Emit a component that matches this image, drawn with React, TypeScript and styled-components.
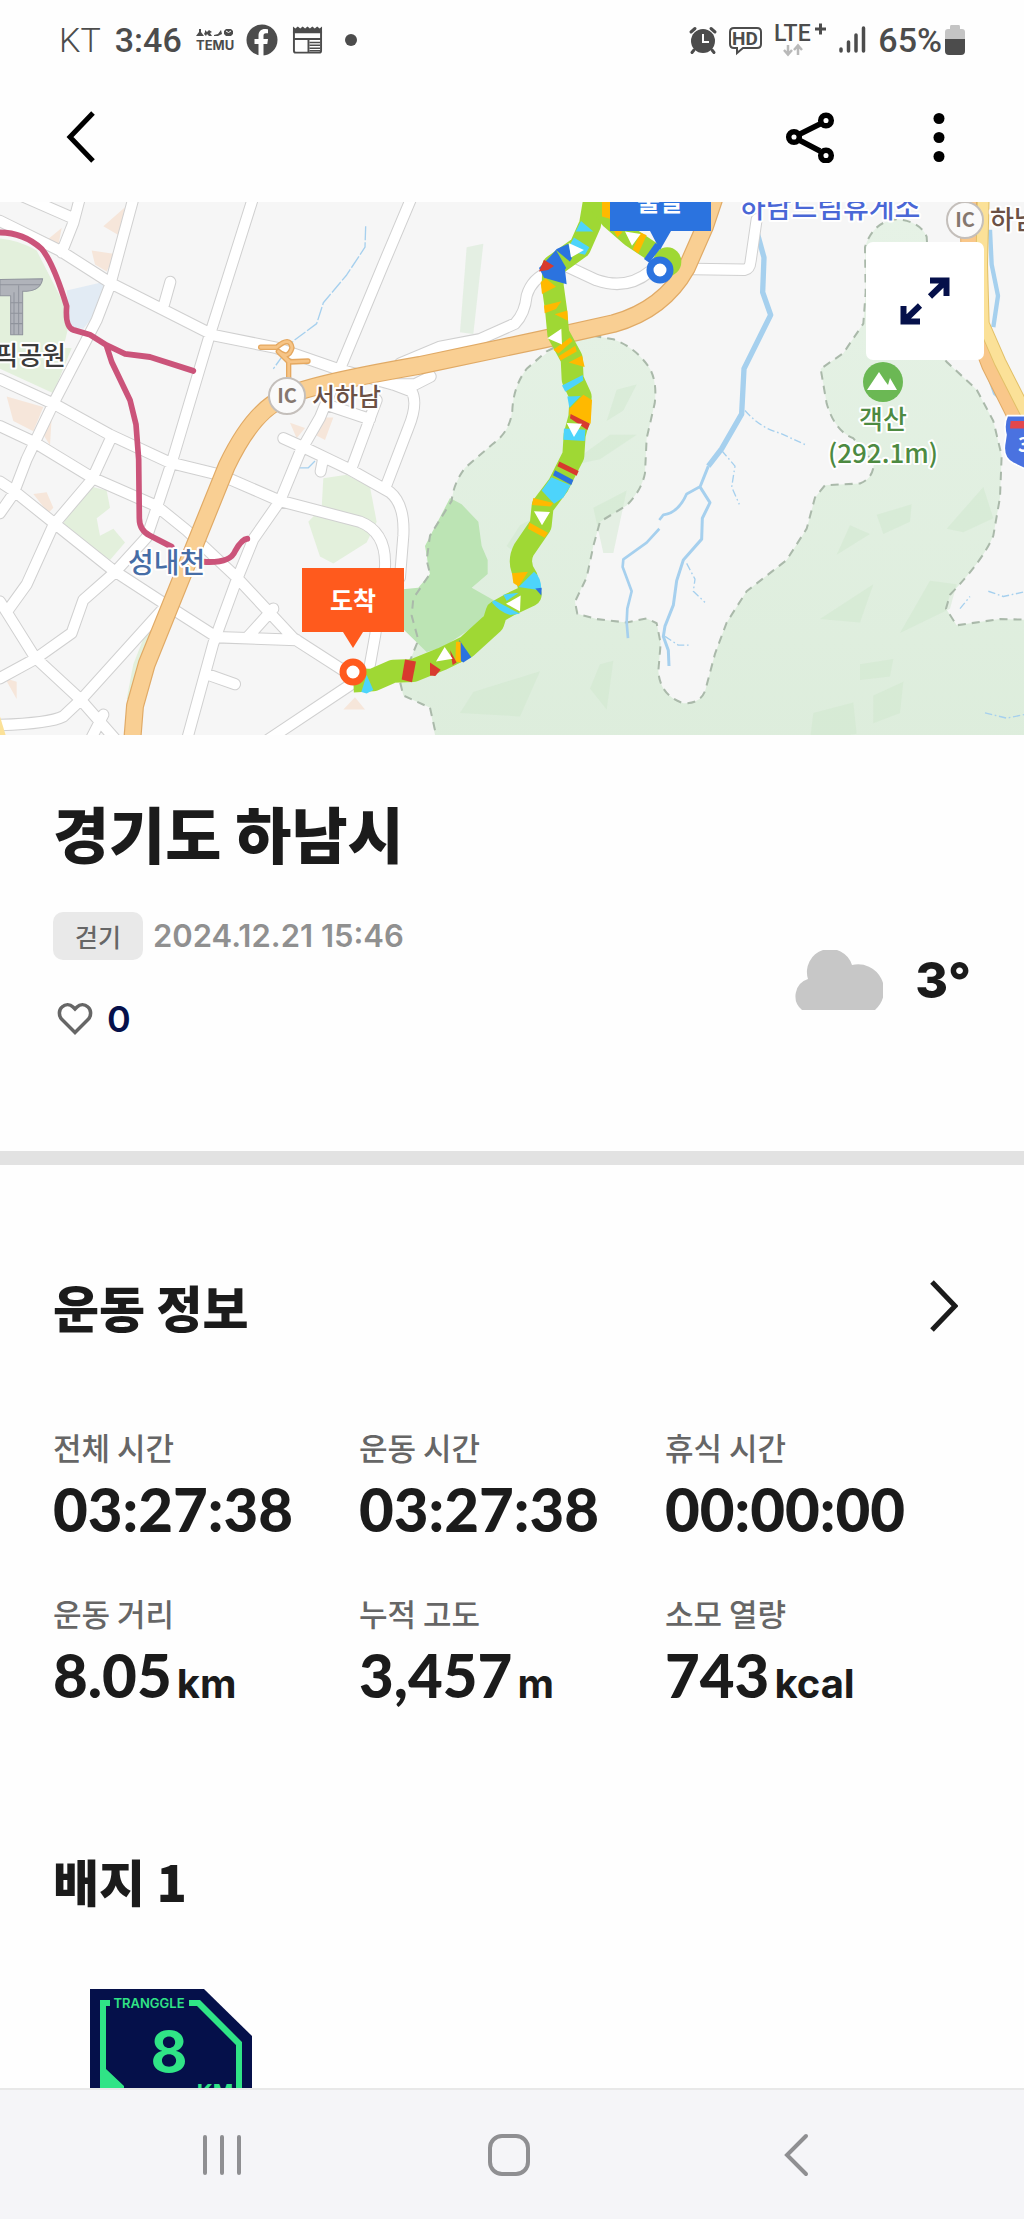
import React from "react";
import styled, { createGlobalStyle } from "styled-components";

const KR = '"Inter", "Noto Sans CJK KR", sans-serif';
const HANGUL = '"Noto Sans CJK KR", sans-serif';

const GlobalStyle = createGlobalStyle`
  *, *::before, *::after { box-sizing: border-box; }
  body { margin: 0; background: #fefefe; font-family: ${KR}; color: #1b1b1b; }
  h1, h2, dl, dd, p { margin: 0; }
  svg { display: block; }
`;

const Screen = styled.div`
  display: flex;
  flex-direction: column;
  height: 100vh;
  overflow: hidden;
`;

const StatusBar = styled.div`
  display: flex;
  flex: none;
  justify-content: space-between;
  align-items: center;
  height: 72px;
  padding: 8px 59px 0;
  color: #4c4c4c;
  font: 500 34px/40px Roboto, sans-serif;

  svg { overflow: visible; }
`;

const StatusGroup = styled.div<{ $gap: number }>`
  display: flex;
  align-items: center;
  gap: ${(p) => p.$gap}px;
`;

const Carrier = styled.span`
  font-weight: 300;
`;

const BatteryGroup = styled.span`
  display: flex;
  align-items: center;
  gap: 3px;
`;

const AppBar = styled.header`
  display: flex;
  flex: none;
  justify-content: space-between;
  align-items: center;
  height: 130px;
  padding: 0 55px 0 51px;
`;

const Actions = styled.div`
  display: flex;
  align-items: center;
  gap: 69px;
`;

const IconButton = styled.button`
  display: flex;
  align-items: center;
  justify-content: center;
  min-width: 60px;
  height: 60px;
  padding: 0;
  border: 0;
  background: none;
  color: inherit;
`;

const BackButton = styled(IconButton)`
  justify-content: flex-start;
  padding-left: 14px;
`;

const NextButton = styled(IconButton)`
  justify-content: flex-end;
  padding-right: 13px;
`;

const Content = styled.main`
  flex: 1;
  min-height: 0;
  overflow-y: auto;
  scrollbar-width: none;
`;

const MapArea = styled.section`
  position: relative;
  height: 533px;
  overflow: hidden;
`;

const ExpandButton = styled.button`
  position: absolute;
  top: 40px;
  right: 40px;
  display: flex;
  align-items: center;
  justify-content: center;
  width: 118px;
  height: 118px;
  padding: 0;
  border: 0;
  border-radius: 7px;
  background: #ffffff;
`;

const Summary = styled.section`
  padding: 56px 53px 112px;
  border-bottom: 14px solid #e2e2e2;
`;

const Place = styled.h1`
  font: 900 61px/84px ${HANGUL};
`;

const SummaryRow = styled.div`
  display: flex;
  justify-content: space-between;
  align-items: center;
  margin-top: 37px;
`;

const Meta = styled.div`
  display: flex;
  align-items: center;
  gap: 10px;
`;

const Chip = styled.span`
  height: 48px;
  padding: 0 22px;
  border-radius: 10px;
  background: #e9e9e9;
  color: #666666;
  font: 500 25px/48px ${HANGUL};
`;

const DateText = styled.time`
  color: #909090;
  font-size: 31px;
  font-weight: 600;
  line-height: 48px;
`;

const LikeButton = styled.button`
  display: flex;
  align-items: center;
  gap: 14px;
  height: 40px;
  margin-top: 39px;
  padding: 0 0 0 4px;
  border: 0;
  background: none;
  color: #05104a;
  font: 600 36px/40px ${KR};
`;

const Weather = styled.div`
  display: flex;
  align-items: center;
  gap: 32px;
  padding-top: 8px;
  font-size: 50px;
  font-weight: 800;
  line-height: 60px;
`;

const Exercise = styled.section`
  padding: 106px 53px 0;
`;

const SectionHead = styled.div`
  display: flex;
  justify-content: space-between;
  align-items: center;
`;

const SectionTitle = styled.h2`
  font: 900 50px/70px ${HANGUL};
`;

const Stats = styled.dl`
  display: grid;
  grid-template-columns: repeat(3, 1fr);
  row-gap: 50px;
  margin-top: 84px;
`;

const StatLabel = styled.dt`
  color: #666666;
  font: 500 31px/44px ${HANGUL};
`;

const StatValue = styled.dd`
  display: flex;
  align-items: baseline;
  gap: 5px;
  height: 64px;
  margin-top: 8px;
  font: 900 60px/64px Lato, sans-serif;
`;

const Unit = styled.span`
  font: 700 40px/40px ${KR};
`;

const Badges = styled.section`
  padding: 138px 53px 0;
`;

const BadgeList = styled.div`
  display: flex;
  margin-top: 74px;
  padding-left: 37px;
`;

const NavBar = styled.nav`
  display: grid;
  flex: none;
  grid-template-columns: repeat(3, 1fr);
  justify-items: center;
  align-items: center;
  height: 131px;
  padding: 0 84px 0 78px;
  border-top: 2px solid #e8e8e8;
  background: #f5f5f8;
`;

const MapLabel = styled.text<{ $size?: number; $bold?: boolean }>`
  font-family: ${HANGUL};
  font-size: ${(p) => p.$size ?? 26}px;
  font-weight: ${(p) => (p.$bold ? 700 : 500)};
  paint-order: stroke;
  stroke-linejoin: round;
`;

const stats = [
  { label: "전체 시간", value: "03:27:38" },
  { label: "운동 시간", value: "03:27:38" },
  { label: "휴식 시간", value: "00:00:00" },
  { label: "운동 거리", value: "8.05", unit: "km" },
  { label: "누적 고도", value: "3,457", unit: "m" },
  { label: "소모 열량", value: "743", unit: "kcal" },
];

const roads = [
  "M60 0L215 65",
  "M242 0L220 80L185 165",
  "M0 75L180 160L335 255L640 403L830 440L1010 500L1180 545L1235 565Q1255 600 1225 670L1155 845",
  "M403 0L330 260L290 360L160 600L80 760L40 860L0 915",
  "M762 0L630 400L515 770L470 900L440 985L345 1085L250 1165L215 1260L105 1335L0 1390",
  "M0 530L170 605L330 690L510 770L660 805L840 880L1080 940Q1160 970 1155 1070L1125 1270L1110 1350",
  "M0 665L100 710L280 815L470 895L560 965L710 1100L880 1275L1050 1380",
  "M0 825L40 850L170 950L340 1080L500 1180L650 1272L890 1280",
  "M335 695L275 820L160 950L80 1120L20 1200",
  "M0 1170L20 1200L105 1330L240 1450L350 1570",
  "M1238 0L1150 200L1020 500L960 640L900 740L840 880L760 990L705 1120L640 1290L560 1570",
  "M850 700L920 730L1050 790L1170 855Q1215 890 1210 980L1200 1100",
  "M985 605L1110 645",
  "M1130 590L1055 785",
  "M1292 522L1245 545L1180 545",
  "M490 1190L245 1450L190 1500Q150 1520 0 1525",
  "M800 1570L1050 1410",
  "M625 1380L705 1407",
  "M511 250L492 315",
  "M820 1190L740 1275",
  "M968 765L962 795",
  "M310 1495L270 1570",
  "M1200 485L1320 437L1440 415L1545 370Q1575 340 1580 290Q1595 240 1650 220",
  "M1700 205L1790 245Q1880 275 1950 220",
  "M2080 213L2235 215Q2250 212 2252 190L2270 70",
];

const forest =
  "M1780 405L1840 415Q1910 440 1950 500Q1972 540 1964 600L1940 700L1935 800Q1925 850 1880 893L1800 940L1780 1010L1760 1100L1725 1170L1732 1205L1790 1220L1880 1230L1940 1218L1970 1232L1982 1290L1975 1370Q1980 1440 2050 1462Q2110 1465 2120 1410L2145 1320L2180 1230L2240 1140L2360 1050L2420 960L2445 870L2475 835L2580 830Q2620 815 2622 770L2560 700Q2505 680 2480 600L2462 500L2530 455L2590 370L2597 280L2595 150Q2620 75 2690 70Q2760 75 2780 120L2800 440L2840 480L2930 560L2980 650L3005 750L3000 870L2980 980Q2950 1050 2850 1150L2838 1190L2870 1238L3000 1220L3090 1222";
const forestWest =
  "M1660 440L1640 450L1580 500Q1540 550 1537 620Q1530 680 1480 715L1395 785Q1360 830 1355 880L1290 980L1280 1050L1290 1090L1240 1160L1235 1210L1255 1280L1232 1335L1200 1400L1210 1440L1290 1475L1312 1570";

const motorway =
  "M395 1590L405 1470L440 1350L600 970L680 780Q760 620 850 585Q900 550 1260 490L1630 415L1840 370Q1990 330 2060 210L2115 90L2150 -10";

const blue = "#2b73df";
const cyan = "#4dd4fb";
const green = "#9fd834";
const amber = "#ffb900";
const red = "#d83a2e";
const orange = "#ff5a1d";

const routeParts: [string, string][] = [
  [cyan, "M1743 75L1780 105L1727 105Z"],
  [cyan, "M1722 122L1768 150L1755 172L1700 160Z"],
  [blue, "M1670 155L1705 140L1716 182L1695 215L1700 257L1632 238L1617 210L1650 178Z"],
  [red, "M1632 186L1662 204L1644 216L1617 220Z"],
  [green, "M1668 158L1720 200L1700 212Z"],
  [amber, "M1622 250L1638 240L1668 264L1626 285Z"],
  [amber, "M1632 318L1684 306L1668 328L1634 340Z"],
  [amber, "M1664 343L1702 332L1704 362Z"],
  [amber, "M1660 445L1710 410L1718 420L1675 456Z"],
  [amber, "M1676 464L1726 434L1730 450L1682 476Z"],
  [amber, "M1706 482L1746 462L1754 495Z"],
  [cyan, "M1686 548L1748 518L1750 534L1696 566Z"],
  [cyan, "M1702 580L1742 578L1708 612Z"],
  [amber, "M1708 615L1750 575L1776 590L1772 658L1708 632Z"],
  [red, "M1712 630L1770 658L1762 676L1710 642Z"],
  [cyan, "M1692 672L1756 675L1754 708L1690 704Z"],
  [red, "M1678 767L1736 794L1730 808L1672 780Z"],
  [blue, "M1665 792L1720 820L1714 834L1659 806Z"],
  [cyan, "M1654 812L1712 835L1690 870L1662 888L1625 850Z"],
  [amber, "M1600 872L1660 886L1652 896L1596 892Z"],
  [amber, "M1588 942L1644 972L1634 986L1584 960Z"],
  [amber, "M1536 1088L1584 1084L1556 1126L1540 1116Z"],
  [cyan, "M1602 1084Q1625 1100 1624 1138L1556 1128Z"],
  [blue, "M1606 1132L1625 1130L1624 1152Z"],
  [cyan, "M1510 1150L1556 1144L1520 1168Z"],
  [cyan, "M1482 1165L1560 1205L1530 1208Q1500 1200 1476 1172Z"],
  [blue, "M1378 1280L1414 1330L1390 1345L1382 1340Z"],
  [amber, "M1368 1285L1382 1285L1382 1345L1366 1342Z"],
  [red, "M1350 1310L1370 1345L1358 1352Z"],
  [red, "M1290 1345L1322 1366L1306 1384L1290 1382Z"],
  [red, "M1215 1336L1248 1342L1236 1402L1205 1394Z"],
  [cyan, "M1100 1380L1120 1424L1100 1434L1084 1430Z"],
  [amber, "M1806 20L1830 20L1830 68L1806 62Z"],
  [amber, "M1840 100L1868 106L1852 122Z"],
  [amber, "M1922 108L1940 116L1915 168L1898 156Z"],
  [blue, "M1966 138L1984 150L1948 195L1932 184Z"],
];

const arrows = [
  "M1706 138L1752 158L1713 180Z",
  "M1875 105L1922 112L1896 146Z",
  "M1642 412L1684 385L1686 430Z",
  "M1700 656L1746 658L1722 696Z",
  "M1602 910L1650 912L1626 950Z",
  "M1518 1176L1562 1152L1560 1198Z",
  "M1334 1300L1358 1334L1308 1342Z",
];

const shades = [
  "M1400 150L1450 140L1420 400L1380 395Z",
  "M1850 560L1910 545L1870 620L1820 650Z",
  "M1700 780L1830 690L1910 690L1800 760Z",
  "M1560 950L1600 930L1560 1040L1520 1010Z",
  "M1780 900L1880 850L1840 1030L1810 1030Z",
  "M1420 1430L1620 1370L1560 1500L1380 1490Z",
  "M1800 1350L1840 1340L1820 1480L1770 1420Z",
  "M2840 960L2950 840L2980 930L2890 970Z",
  "M2510 1035L2550 950L2610 975Z",
  "M2630 920L2735 890L2730 940L2650 975Z",
  "M2700 1260L2790 1110L2870 1120L2850 1190Z",
  "M2460 1220L2620 1120L2580 1230Z",
  "M2580 1350L2680 1335L2670 1385L2580 1395Z",
  "M2620 1440L2710 1400L2700 1490L2620 1520Z",
  "M2440 1490L2560 1460L2570 1550L2430 1570Z",
];

function RouteMap() {
  return (
    <svg
      width="100%"
      height="100%"
      viewBox="0 202 1024 533"
      preserveAspectRatio="xMidYMid slice"
      role="img"
      aria-label="이동 경로 지도"
    >
      <defs>
        <linearGradient id="hill" x1="0" y1="0" x2="0" y2="1">
          <stop offset="0" stopColor="#e6f2e6" />
          <stop offset="1" stopColor="#ddeddc" />
        </linearGradient>
      </defs>
      <rect y="202" width="1024" height="533" fill="#f6f6f6" />
      <g transform="translate(0 195) scale(0.33333 0.3476)" fill="none" strokeLinejoin="round">
        <path fill="#e3f0dc" d="M0 125Q60 130 110 160L190 310L205 380L190 440L215 440L160 570L0 500Z" />
        <path fill="#e3f0dc" d="M270 838L320 850L330 900L290 930L300 980L340 960L375 1000L330 1050L185 950Z" />
        <path fill="#e3f0dc" d="M970 815L1040 805L1110 840L1130 940L1100 1000L1000 1060L960 1040L925 940L965 900Z" />
        <path fill="#e3f0dc" d="M445 1240L480 1200L390 1450L380 1450L400 1350Z" />
        <path fill="#e2ebf4" d="M200 275L310 250L320 300L250 385L210 380Z" />
        <path
          fill="#f6e6da"
          d="M310 90L375 35L355 115ZM275 160L345 170L320 220L285 200ZM140 130L185 95L175 145ZM20 580L130 610L100 680L40 650ZM100 860L140 855L160 900L145 915ZM130 690L155 640L150 720ZM950 640L1000 640L975 705L945 690ZM870 655L915 670L890 700ZM15 1390L50 1400L50 1450ZM1030 1480L1065 1445L1095 1480Z"
        />

        <path
          fill="url(#hill)"
          d={`${forest}L3090 1590L1312 1590L1290 1475L1210 1440L1200 1400L1232 1335L1255 1280L1235 1210L1240 1160L1290 1090L1280 1050L1290 980L1355 880Q1360 830 1395 785L1480 715Q1530 680 1537 620Q1540 550 1580 500L1660 440Z`}
        />
        <path fill="#cfe6cd" fillOpacity="0.45" d={shades.join("")} />
        <path
          fill="#bce4b4"
          d="M1350 872L1385 890L1435 940L1445 1010L1463 1050L1463 1090L1415 1130L1480 1165L1440 1230L1330 1300L1280 1315L1200 1240L1200 1135L1255 1130L1290 1090L1275 1010Z"
        />
        <path stroke="#aab9aa" strokeWidth="6" strokeDasharray="24 18" d={forest + forestWest} />

        <g stroke="#a6d0ee" strokeWidth="4">
          <path d="M1097 90L1095 150L1040 230L970 310L950 370L880 420L820 500" strokeDasharray="40 6" />
          <path d="M900 785L925 785L945 765" />
          <path
            strokeWidth="16"
            d="M2272 110L2292 180L2288 280L2312 345L2232 500L2225 630L2165 730L2125 780"
          />
          <path strokeWidth="9" d="M2125 780L2100 840L2130 885L2107 930L2105 990L2050 1050L2030 1110L2020 1180L1995 1240L1990 1270L2005 1310L2007 1355" />
          <path strokeWidth="8" d="M2098 840L2060 860Q2035 915 1990 920L1978 935M1978 960L1940 1000L1870 1048L1868 1070L1895 1140L1882 1190L1880 1230L1884 1275" />
          <path strokeDasharray="22 8 5 8" d="M2060 1060L2085 1105L2080 1140L2115 1172M2235 620Q2280 670 2340 685L2420 720M2165 735L2205 780L2195 840L2218 890M2880 1190L2910 1155M2965 1140L3010 1155L3072 1142M2955 1490L3020 1505L3072 1495M1995 1270L2035 1295L2070 1295" />
          <path strokeWidth="13" d="M2970 100L2975 200L2994 290L2980 380M2960 500L2985 570L3025 605" />
        </g>

        <path stroke="#d0d0d0" strokeWidth="36" strokeLinecap="round" d={roads.join("")} />
        <path stroke="#ffffff" strokeWidth="30" strokeLinecap="round" d={roads.join("")} />

        <path stroke="#e0aa66" strokeWidth="54" d={motorway} />
        <path stroke="#f9cf93" strokeWidth="47" d={motorway} />
        <path stroke="#e5a860" strokeWidth="16" strokeLinecap="round" d="M782 438L830 438Q870 405 876 440Q865 475 835 450L870 480L924 478M866 530L866 480L835 450" />
        <path stroke="#f6c486" strokeWidth="8" strokeLinecap="round" d="M782 438L830 438Q870 405 876 440Q865 475 835 450L870 480L924 478M866 530L866 480L835 450" />

        <path stroke="#e0aa66" strokeWidth="52" d="M2905 20L2910 340L2970 490L3090 720" />
        <path stroke="#f9c78a" strokeWidth="46" d="M2905 20L2910 340L2970 490L3090 720" />
        <path stroke="#e2c068" strokeWidth="38" d="M2950 0L2945 200L2950 370L3000 480L3090 650" />
        <path stroke="#fbe198" strokeWidth="32" d="M2950 0L2945 200L2950 370L3000 480L3090 650" />
        <path fill="#fbe198" d="M0 1500L22 1570L0 1570Z" />

        <path
          stroke="#cb547a"
          strokeWidth="17"
          strokeLinecap="round"
          d="M0 108Q70 108 125 155Q160 195 200 320Q195 380 220 388L270 402L320 432L375 457L450 466L580 506M320 435L335 480L390 590L408 660L416 760L418 930Q418 965 450 980L515 1012M610 1055Q690 1060 705 1025Q725 990 742 989"
        />
        <path
          fill="#b0b3ba"
          stroke="#8f939c"
          strokeWidth="3"
          d="M0 243L128 241Q122 275 80 277L68 277L68 402L32 402L32 290L0 290Z"
        />
        <path stroke="#8f939c" strokeWidth="3" d="M0 258L122 258M42 280V402M56 260V402M32 310H68M32 340H68M32 370H68" />

        <path
          stroke={green}
          strokeWidth="66"
          d="M1785 0L1770 85L1740 150L1660 205L1658 260L1668 330L1675 400L1715 470L1718 530L1742 580L1738 640L1724 690L1720 750L1675 835L1628 895L1622 950L1572 1020Q1550 1060 1580 1100L1592 1150L1530 1178L1490 1200L1480 1230L1400 1300L1325 1335L1240 1368L1180 1370L1120 1395L1060 1398"
        />
        <path stroke={green} strokeWidth="56" d="M1790 20L1830 70L1890 120L1960 165" />
        <circle cx="2002" cy="192" r="42" fill={green} />
        {routeParts.map(([color, d]) => (
          <path key={d} fill={color} d={d} />
        ))}
        <path fill="#ffffff" d={arrows.join("")} />

        <path
          fill="#4a72e0"
          stroke="#ffffff"
          strokeWidth="5"
          d="M3022 635H3080V790L3040 772Q3005 755 3015 710L3018 690Q3010 660 3022 635Z"
        />
        <path fill="#e2474c" d="M3032 650H3080V672H3030Z" />
      </g>

      <path fill={blue} d="M610 195H711V231H671L660 250L650 231H610Z" />
      <circle cx="660" cy="270" r="10" fill="#ffffff" stroke={blue} strokeWidth="7" />
      <path fill={orange} d="M302 568H404V632H363L353 648L343 632H302Z" />
      <circle cx="353" cy="672" r="10" fill="#ffffff" stroke={orange} strokeWidth="7" />

      <g fill="#fafafa" stroke="#c4bfbb" strokeWidth="2">
        <circle cx="287" cy="396" r="18" />
        <circle cx="965" cy="220" r="18" />
      </g>

      <circle cx="883" cy="382" r="20" fill="#6bb854" />
      <path fill="#ffffff" d="M867 390L879 372L885 381L888 385L890 378L897 390Z" />

      <MapLabel x="66" y="365" textAnchor="end" fill="#3b3b3b" stroke="#ffffff" strokeWidth="4">픽공원</MapLabel>
      <MapLabel x="312" y="406" $size={25} fill="#6b5145" stroke="#ffffff" strokeWidth="4">서하남</MapLabel>
      <MapLabel x="128" y="573" $size={28} fill="#466da6" stroke="#ffffff" strokeWidth="4">성내천</MapLabel>
      <MapLabel x="287" y="403" $size={20} textAnchor="middle" fill="#85786f" $bold>IC</MapLabel>
      <MapLabel x="965" y="227" $size={20} textAnchor="middle" fill="#85786f" $bold>IC</MapLabel>
      <MapLabel x="990" y="229" fill="#6b5145" stroke="#ffffff" strokeWidth="4">하남</MapLabel>
      <MapLabel x="740" y="218" $size={28} fill="#4a67d6" stroke="#ffffff" strokeWidth="4">하남드림휴게소</MapLabel>
      <MapLabel textAnchor="middle" fill="#4d8a41" stroke="#ffffff" strokeWidth="4">
        <tspan x="883" y="429">객산</tspan>
        <tspan x="883" y="463">(292.1m)</tspan>
      </MapLabel>
      <MapLabel x="353" y="610" $size={25} textAnchor="middle" fill="#ffffff" $bold>도착</MapLabel>
      <MapLabel x="660" y="211" $size={25} textAnchor="middle" fill="#ffffff" $bold>출발</MapLabel>
      <MapLabel x="1018" y="452" $size={20} fill="#ffffff" $bold>3</MapLabel>
    </svg>
  );
}

const TemuIcon = () => (
  <svg width="36" height="22" viewBox="0 0 36 22" fill="currentColor" aria-label="Temu">
    <path d="M3 0h2v3l3 4H0l3-4zM9 1l2 2 2-2 3 2-2 1 2 3h-3l-2-2-1 2-2-2 1-2zM18 6l4-1 3-4 1 4-4 2h-4zM30 0h5l2 2v3l-2 2h-5l-2-2V2z" />
    <path stroke="#fefefe" d="M30 2q2.500 3 5 0" fill="none" />
    <text x="0" y="21" fontFamily="Inter, sans-serif" fontSize="13" fontWeight="700">TEMU</text>
  </svg>
);

const FacebookIcon = () => (
  <svg width="32" height="32" viewBox="0 0 32 32" aria-label="Facebook">
    <circle cx="16" cy="16" r="15.500" fill="currentColor" />
    <path fill="#fefefe" d="M12.500 32V20H8.500v-5h4v-3.200c0-4.500 2.500-6.800 6.500-6.800 1.500 0 3 .3 3 .3v4h-2c-2 0-2.500 1.200-2.500 2.500V15h4.500l-.7 5H17.500v12z" />
  </svg>
);

const NewsIcon = () => (
  <svg width="31" height="30" viewBox="0 0 32 30" fill="none" stroke="currentColor" strokeWidth="2" aria-label="뉴스">
    <path fill="currentColor" stroke="none" d="M1 1l2.500 2 2.500-2L8.500 3 11 1l2.500 2L16 1l2.500 2L21 1l2.500 2L26 1l2.500 2L31 1v7H1z" />
    <path d="M2 6v20q0 2 2 2h24q2 0 2-2V6M3 14h26M17 14v14" />
    <path strokeWidth="1.500" d="M18 17.500h11M18 20.500h11M18 23.500h11M18 26h11" />
  </svg>
);

const AlarmIcon = () => (
  <svg width="28" height="28" viewBox="0 0 28 28" fill="none" stroke="currentColor" strokeWidth="3" strokeLinecap="round" aria-label="알람">
    <circle cx="14" cy="15" r="12" fill="currentColor" stroke="none" />
    <path d="M2 6l4-3.500M26 6l-4-3.500M5 24l-2 2.500M23 24l2 2.500" />
    <path stroke="#fefefe" strokeWidth="2" strokeLinecap="butt" d="M14 8v8h6" />
  </svg>
);

const HdIcon = () => (
  <svg width="33" height="30" viewBox="0 0 33 30" fill="none" stroke="currentColor" strokeWidth="2" aria-label="HD">
    <path d="M5 3h23q4 0 4 4v12q0 4-4 4H14l-6 5v-5H5q-4 0-4-4V7q0-4 4-4z" />
    <text x="16" y="20" textAnchor="middle" fill="currentColor" stroke="none" fontFamily="Roboto, sans-serif" fontSize="19" fontWeight="700">HD</text>
  </svg>
);

const LteIcon = () => (
  <svg width="52" height="34" viewBox="0 0 52 34" fill="none" aria-label="LTE+">
    <text x="0" y="18" fill="currentColor" fontFamily="Roboto, sans-serif" fontSize="23" fontWeight="500">LTE</text>
    <path stroke="currentColor" strokeWidth="3" d="M41 6h11M46.500 0.500v11" />
    <path stroke="#b9b9b9" strokeWidth="2.500" d="M14 22v9M10 27l4 4.500 4-4.500M24 32v-9M20 27l4-4.500 4 4.500" />
  </svg>
);

const SignalIcon = () => (
  <svg width="28" height="28" viewBox="0 0 28 28" stroke="currentColor" strokeWidth="3.500" strokeLinecap="round" aria-label="신호">
    <path d="M3 23v2M10.500 16v9M18 9v16M25.500 2v23" />
  </svg>
);

const BatteryIcon = () => (
  <svg width="20" height="30" viewBox="0 0 20 30" aria-label="배터리">
    <path fill="#c4c4c4" d="M6 0h8q1 0 1 2v2h2q3 0 3 3v9H0V7q0-3 3-3h2V2q0-2 1-2z" />
    <path fill="currentColor" d="M0 14h20v12q0 4-4 4H4q-4 0-4-4z" />
  </svg>
);

const ShareIcon = () => (
  <svg width="50" height="52" viewBox="0 0 50 52" fill="none" stroke="#000000" strokeWidth="5.500">
    <path d="M14 23.500L35 13M14 29L35 40" />
    <circle cx="9" cy="26" r="5.300" />
    <circle cx="41" cy="9.500" r="5.300" />
    <circle cx="41" cy="44.500" r="5.300" />
  </svg>
);

const MoreIcon = () => (
  <svg width="12" height="50" viewBox="0 0 12 50" fill="#000000">
    <circle cx="6" cy="6.500" r="5.500" />
    <circle cx="6" cy="25.500" r="5.500" />
    <circle cx="6" cy="44.500" r="5.500" />
  </svg>
);

const ExpandIcon = () => (
  <svg width="50" height="48" viewBox="0 0 50 48" fill="none" stroke="#05104a" strokeWidth="6">
    <path d="M30 3.500h16.500V19M46 4L30 19.500M20 44.500H3.500V29M4 44L20 28.500" />
  </svg>
);

const HeartIcon = () => (
  <svg width="36" height="34" viewBox="0 0 36 34" fill="none" stroke="#666666" strokeWidth="3.500">
    <path d="M18 30.500L5 17.500C1.500 14 1.500 8 5 5C8.500 1.800 13 2 16 5L18 7L20 5C23 2 27.500 1.800 31 5C34.500 8 34.500 14 31 17.500Z" />
  </svg>
);

const CloudIcon = () => (
  <svg width="88" height="60" viewBox="0 0 88 60" fill="#c7c7c7" aria-label="흐림">
    <path d="M7 60A18 18 0 0 1 13 29A22.500 22.500 0 0 1 57 15A26 26 0 0 1 80 60Z" />
  </svg>
);

const DistanceBadge = () => (
  <svg width="162" height="190" viewBox="0 0 162 190" aria-label="8KM 배지">
    <path fill="#05104a" d="M0 0H114L162 47V190H0Z" />
    <path fill="#30e486" d="M10 11H20V17H16V80L34 97V180H10ZM99 11H110L152 53V180H146V56L107 17H99Z" />
    <g fill="#30e486" fontFamily="Inter, sans-serif" textAnchor="middle">
      <text x="59" y="19" fontSize="13" fontWeight="600">TRANGGLE</text>
      <text x="79" y="83" fontSize="57" fontWeight="700">8</text>
      <text x="125" y="111" fontSize="22" fontWeight="700">KM</text>
    </g>
  </svg>
);

export default function App() {
  return (
    <>
      <GlobalStyle />
      <Screen>
        <StatusBar>
          <StatusGroup $gap={14}>
            <Carrier>KT</Carrier>
            <span>3:46</span>
            <TemuIcon />
            <FacebookIcon />
            <NewsIcon />
            <svg width="36" height="12" viewBox="0 0 36 12" fill="currentColor" aria-hidden="true">
              <circle cx="14" cy="6" r="6" />
            </svg>
          </StatusGroup>
          <StatusGroup $gap={12}>
            <AlarmIcon />
            <HdIcon />
            <LteIcon />
            <SignalIcon />
            <BatteryGroup>
              <span>65%</span>
              <BatteryIcon />
            </BatteryGroup>
          </StatusGroup>
        </StatusBar>

        <AppBar>
          <BackButton aria-label="뒤로">
            <svg width="30" height="52" viewBox="0 0 30 52" fill="none" stroke="#000000" strokeWidth="5">
              <path d="M28 2L5 26L28 50" />
            </svg>
          </BackButton>
          <Actions>
            <IconButton aria-label="공유">
              <ShareIcon />
            </IconButton>
            <IconButton aria-label="더보기">
              <MoreIcon />
            </IconButton>
          </Actions>
        </AppBar>

        <Content>
          <MapArea>
            <RouteMap />
            <ExpandButton aria-label="지도 확대">
              <ExpandIcon />
            </ExpandButton>
          </MapArea>

          <Summary>
            <Place>경기도 하남시</Place>
            <SummaryRow>
              <div>
                <Meta>
                  <Chip>걷기</Chip>
                  <DateText>2024.12.21 15:46</DateText>
                </Meta>
                <LikeButton aria-label="좋아요 0">
                  <HeartIcon />
                  <span>0</span>
                </LikeButton>
              </div>
              <Weather>
                <CloudIcon />
                <span>3°</span>
              </Weather>
            </SummaryRow>
          </Summary>

          <Exercise>
            <SectionHead>
              <SectionTitle>운동 정보</SectionTitle>
              <NextButton aria-label="운동 정보 더보기">
                <svg width="28" height="52" viewBox="0 0 28 52" fill="none" stroke="#1b1b1b" strokeWidth="5">
                  <path d="M2 2L25 26L2 50" />
                </svg>
              </NextButton>
            </SectionHead>
            <Stats>
              {stats.map((s) => (
                <div key={s.label}>
                  <StatLabel>{s.label}</StatLabel>
                  <StatValue>
                    {s.value}
                    {s.unit && <Unit>{s.unit}</Unit>}
                  </StatValue>
                </div>
              ))}
            </Stats>
          </Exercise>

          <Badges>
            <SectionTitle>배지 1</SectionTitle>
            <BadgeList>
              <DistanceBadge />
            </BadgeList>
          </Badges>
        </Content>

        <NavBar>
          <IconButton aria-label="최근 앱">
            <svg width="40" height="42" viewBox="0 0 40 42" stroke="#8f8f92" strokeWidth="4" strokeLinecap="round">
              <path d="M3 3v36M20 3v36M37 3v36" />
            </svg>
          </IconButton>
          <IconButton aria-label="홈">
            <svg width="44" height="44" viewBox="0 0 44 44" fill="none" stroke="#8f8f92" strokeWidth="4">
              <rect x="3" y="3" width="38" height="38" rx="12" />
            </svg>
          </IconButton>
          <IconButton aria-label="이전">
            <svg width="26" height="44" viewBox="0 0 26 44" fill="none" stroke="#8f8f92" strokeWidth="4" strokeLinecap="round">
              <path d="M23 3L4 22L23 41" />
            </svg>
          </IconButton>
        </NavBar>
      </Screen>
    </>
  );
}
